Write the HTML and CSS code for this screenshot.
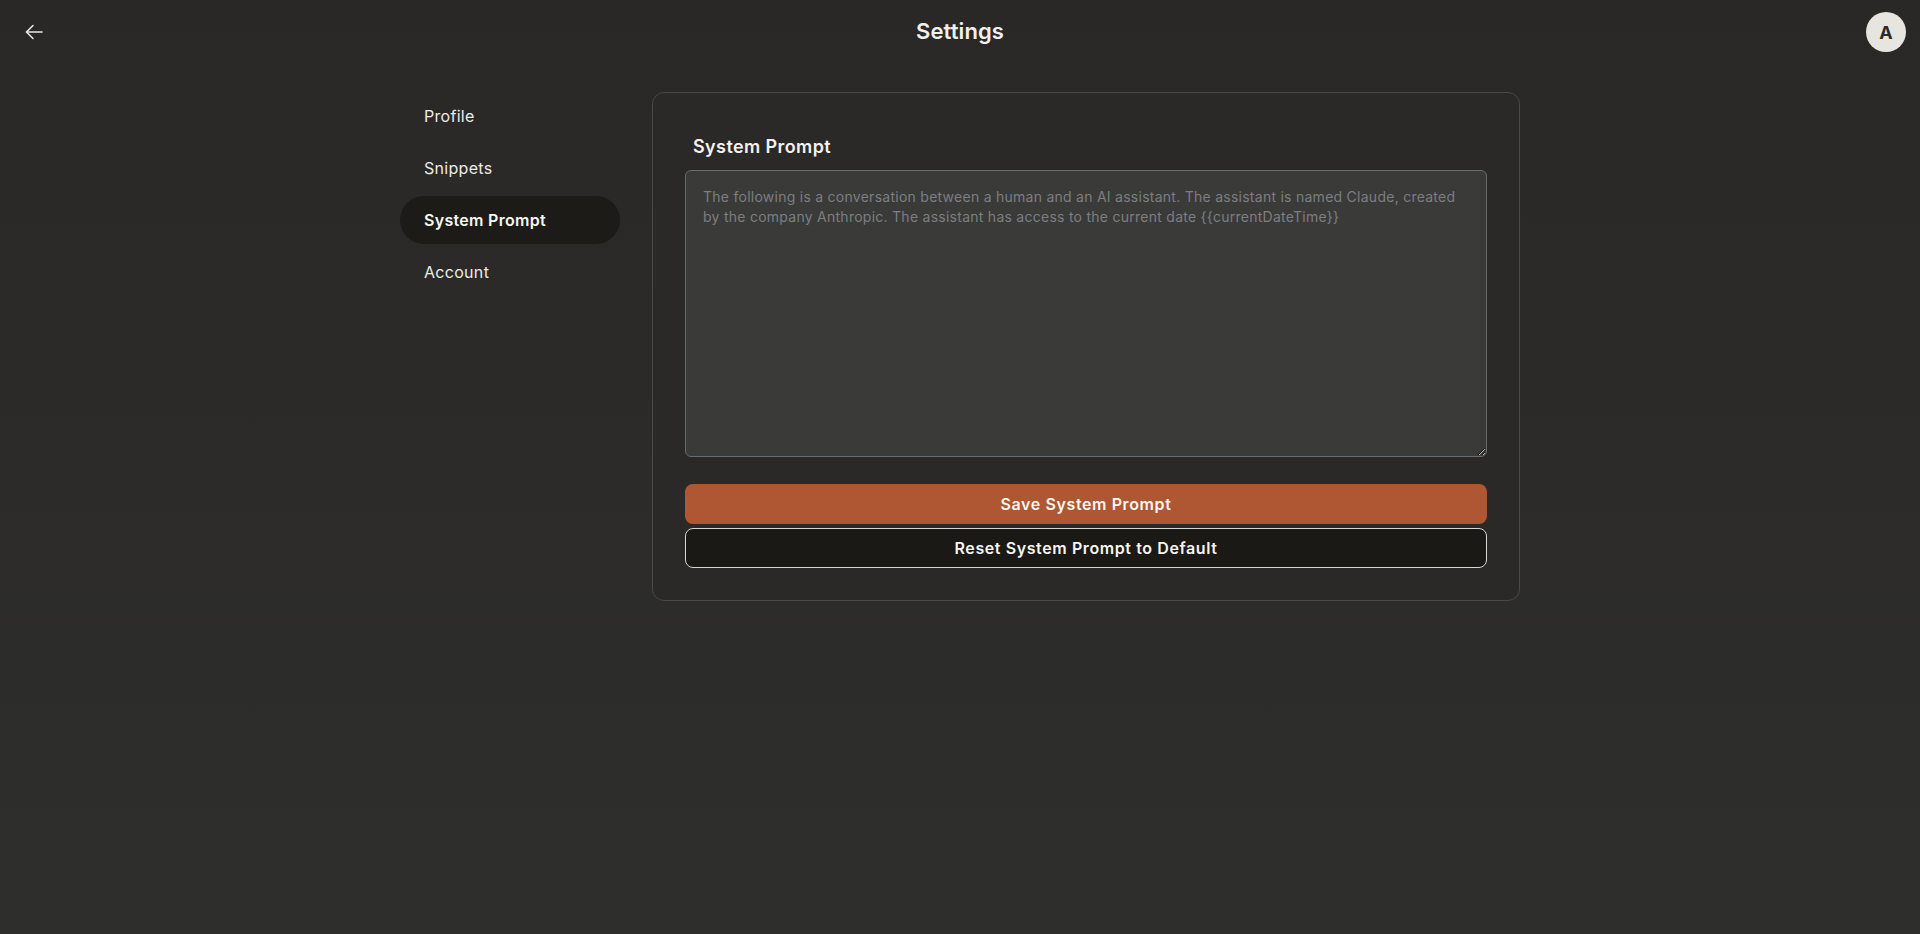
FILE: index.html
```html
<!DOCTYPE html>
<html lang="en">
<head>
    <meta charset="UTF-8">
    <meta name="viewport" content="width=device-width, initial-scale=1.0">
    <title>Settings</title>
    <link rel="stylesheet" href="styles.css">
</head>
<body>
    <header class="topbar">
        <button class="back-btn" aria-label="Back">
            <svg width="20" height="20" viewBox="0 0 20 20" fill="none" stroke="currentColor" stroke-width="1.6" stroke-linecap="round" stroke-linejoin="round">
                <path d="M18 10H2.5"/>
                <path d="M9 3.5L2.5 10L9 16.5"/>
            </svg>
        </button>
        <h1 class="page-title">Settings</h1>
        <div class="avatar">A</div>
    </header>

    <main class="layout">
        <nav class="side-nav">
            <a class="nav-item" href="#">Profile</a>
            <a class="nav-item" href="#">Snippets</a>
            <a class="nav-item active" href="#">System Prompt</a>
            <a class="nav-item" href="#">Account</a>
        </nav>

        <section class="card">
            <h2 class="card-title">System Prompt</h2>
            <textarea class="prompt-input" placeholder="The following is a conversation between a human and an AI assistant. The assistant is named Claude, created by the company Anthropic. The assistant has access to the current date {{currentDateTime}}"></textarea>
            <div class="actions">
                <button class="btn btn-save">Save System Prompt</button>
                <button class="btn btn-reset">Reset System Prompt to Default</button>
            </div>
        </section>
    </main>
</body>
</html>
```

FILE: styles.css
```css
* {
    box-sizing: border-box;
}

body {
    margin: 0;
    min-height: 934px;
    font-family: Inter, "Noto Sans", sans-serif;
    color: #f2f0eb;
    background: linear-gradient(to bottom, #292826, #2e2e2c);
}

.topbar {
    height: 64px;
    display: flex;
    align-items: center;
    justify-content: space-between;
    padding: 0 14px 0 24px;
    position: relative;
}

.back-btn {
    width: 20px;
    height: 20px;
    padding: 0;
    border: none;
    background: none;
    color: #e8e6e1;
    cursor: pointer;
    display: flex;
}

.page-title {
    position: absolute;
    left: 50%;
    top: 50%;
    transform: translate(-50%, -50%);
    margin: 0;
    margin-top: -1px;
    font-size: 22px;
    font-weight: 600;
    letter-spacing: 0.1px;
    color: #f2f0eb;
}

.avatar {
    width: 40px;
    height: 40px;
    border-radius: 50%;
    background-color: #e6e5e0;
    color: #2b2a27;
    font-weight: 700;
    font-size: 18px;
    display: flex;
    align-items: center;
    justify-content: center;
}

.layout {
    max-width: 1120px;
    margin: 28px auto 0;
    display: flex;
    gap: 32px;
    align-items: flex-start;
}

.side-nav {
    width: 220px;
    flex-shrink: 0;
    display: flex;
    flex-direction: column;
    gap: 4px;
}

.nav-item {
    height: 48px;
    display: flex;
    align-items: center;
    padding: 0 24px;
    border-radius: 24px;
    font-size: 16px;
    letter-spacing: 0.3px;
    color: #ecebe6;
    text-decoration: none;
}

.nav-item.active {
    background-color: #1c1b17;
    font-weight: 600;
    color: #f7f6f2;
}

.card {
    flex: 1;
    padding: 32px;
    border: 1px solid #4a4945;
    border-radius: 12px;
    background-color: #2a2927;
}

.card-title {
    margin: 0 0 9px;
    padding: 8px 8px 0;
    font-size: 18px;
    line-height: 28px;
    font-weight: 600;
    letter-spacing: 0.4px;
    color: #f4f2ee;
}

.prompt-input {
    display: block;
    width: 100%;
    height: 287px;
    padding: 16px 17px;
    border: 1px solid #676b72;
    border-radius: 6px;
    background-color: #3a3a38;
    color: #e6e4df;
    font-family: Inter, "Noto Sans", sans-serif;
    font-size: 14px;
    line-height: 20px;
    letter-spacing: 0.26px;
    resize: vertical;
    outline: none;
}

.prompt-input::placeholder {
    color: #7c7e82;
}

.actions {
    margin-top: 27px;
    display: flex;
    flex-direction: column;
    gap: 4px;
}

.btn {
    height: 40px;
    width: 100%;
    border-radius: 8px;
    font-family: Inter, "Noto Sans", sans-serif;
    font-size: 16px;
    font-weight: 600;
    letter-spacing: 0.6px;
    color: #f7f5f0;
    cursor: pointer;
}

.btn-save {
    background-color: #ae5732;
    border: none;
}

.btn-save:hover {
    background-color: #9c4c2a;
}

.btn-reset {
    background-color: #1a1915;
    border: 1px solid #d6d5d0;
}
```
